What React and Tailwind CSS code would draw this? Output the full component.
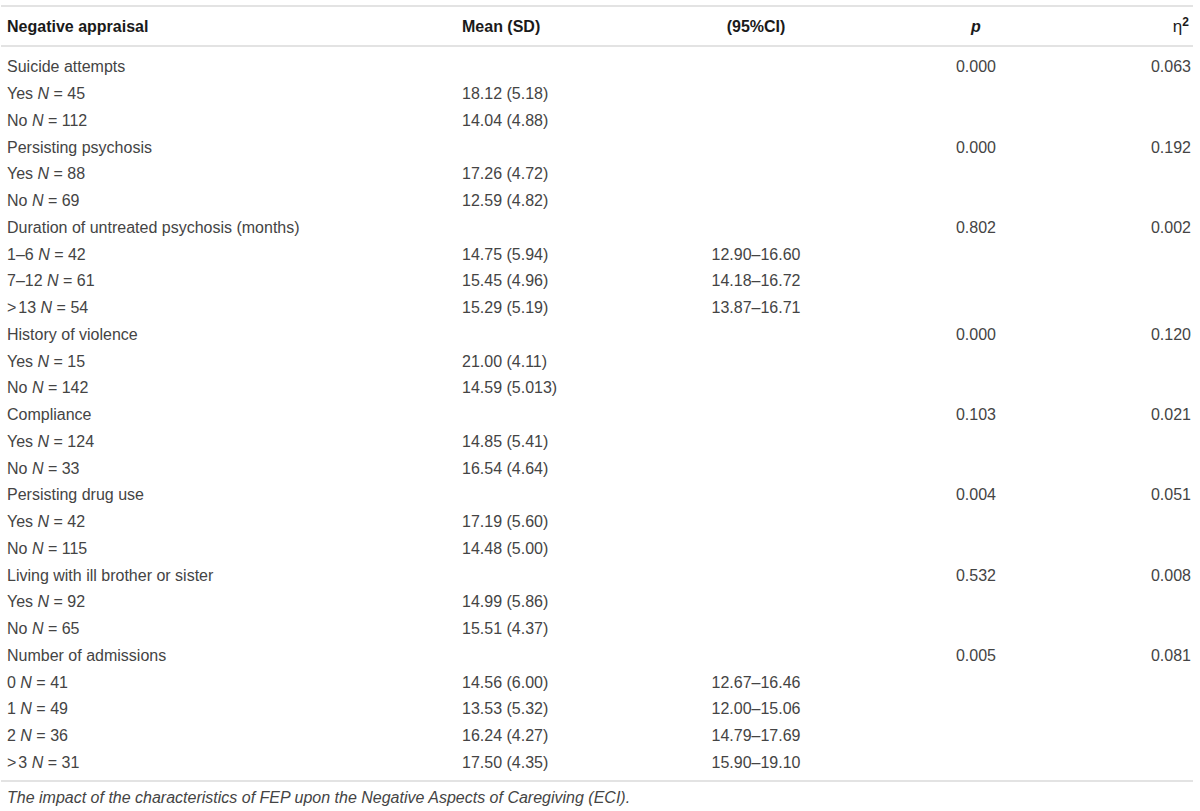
import React from "react";

const rows = [
  { l: "Suicide attempts", p: "0.000", e: "0.063" },
  { l: ["Yes", "45"], m: "18.12 (5.18)" },
  { l: ["No", "112"], m: "14.04 (4.88)" },
  { l: "Persisting psychosis", p: "0.000", e: "0.192" },
  { l: ["Yes", "88"], m: "17.26 (4.72)" },
  { l: ["No", "69"], m: "12.59 (4.82)" },
  { l: "Duration of untreated psychosis (months)", p: "0.802", e: "0.002" },
  { l: ["1–6", "42"], m: "14.75 (5.94)", c: "12.90–16.60" },
  { l: ["7–12", "61"], m: "15.45 (4.96)", c: "14.18–16.72" },
  { l: [">13", "54", true], m: "15.29 (5.19)", c: "13.87–16.71" },
  { l: "History of violence", p: "0.000", e: "0.120" },
  { l: ["Yes", "15"], m: "21.00 (4.11)" },
  { l: ["No", "142"], m: "14.59 (5.013)" },
  { l: "Compliance", p: "0.103", e: "0.021" },
  { l: ["Yes", "124"], m: "14.85 (5.41)" },
  { l: ["No", "33"], m: "16.54 (4.64)" },
  { l: "Persisting drug use", p: "0.004", e: "0.051" },
  { l: ["Yes", "42"], m: "17.19 (5.60)" },
  { l: ["No", "115"], m: "14.48 (5.00)" },
  { l: "Living with ill brother or sister", p: "0.532", e: "0.008" },
  { l: ["Yes", "92"], m: "14.99 (5.86)" },
  { l: ["No", "65"], m: "15.51 (4.37)" },
  { l: "Number of admissions", p: "0.005", e: "0.081" },
  { l: ["0", "41"], m: "14.56 (6.00)", c: "12.67–16.46" },
  { l: ["1", "49"], m: "13.53 (5.32)", c: "12.00–15.06" },
  { l: ["2", "36"], m: "16.24 (4.27)", c: "14.79–17.69" },
  { l: [">3", "31", true], m: "17.50 (4.35)", c: "15.90–19.10" },
];

const grid = "grid grid-cols-[455px_194px_200px_240px_95px] items-center";

function Label({ l }) {
  if (typeof l === "string") return <span>{l}</span>;
  const [pre, n, gt] = l;
  return (
    <span>
      {gt ? (
        <>
          <span className="mr-[2px]">&gt;</span>
          {pre.slice(1)}
        </>
      ) : (
        pre
      )}{" "}
      <i>N</i> = {n}
    </span>
  );
}

export default function App() {
  return (
    <div
      className="bg-white w-[1200px] h-[811px] text-[16px] text-[#444]"
      style={{ fontFamily: '"Liberation Sans", Arial, sans-serif' }}
    >
      <div className="w-[1192px] ml-px pt-[5px]">
        <div className="h-[2px] bg-[#e3e3e3]" />
        <div className={`${grid} pl-[6px] h-[38px] pt-[2px] font-bold text-[#1a1a1a]`}>
          <div>Negative appraisal</div>
          <div>Mean (SD)</div>
          <div className="text-center">(95%CI)</div>
          <div className="text-center italic">p</div>
          <div className="text-right pr-[2px]">
            <span className="font-normal text-[17px]">η</span>
            <sup className="text-[12px]">2</sup>
          </div>
        </div>
        <div className="h-[2px] bg-[#e3e3e3]" />
        <div className="pt-[7px] pb-[4px]">
          {rows.map((r, i) => (
            <div key={i} className={`${grid} pl-[6px] h-[26.75px]`}>
              <div>
                <Label l={r.l} />
              </div>
              <div>{r.m || ""}</div>
              <div className="text-center">{r.c || ""}</div>
              <div className="text-center">{r.p || ""}</div>
              <div className="text-right">{r.e || ""}</div>
            </div>
          ))}
        </div>
        <div className="h-[2px] bg-[#e3e3e3]" />
        <div className="pl-[6px] pt-[4px] italic">
          The impact of the characteristics of FEP upon the Negative Aspects of Caregiving (ECI).
        </div>
      </div>
    </div>
  );
}
